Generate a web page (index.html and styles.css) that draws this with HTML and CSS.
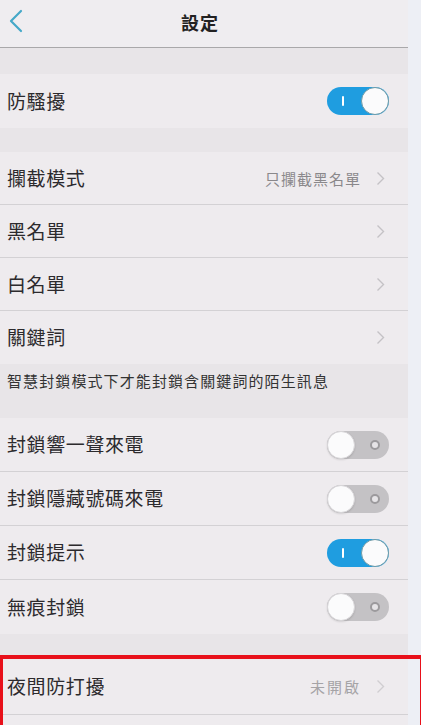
FILE: index.html
```html
<!DOCTYPE html>
<html lang="zh-Hant">
<head>
<meta charset="utf-8">
<title>設定</title>
<link rel="stylesheet" href="styles.css">
</head>
<body>
<div class="page">
  <main class="screen">
    <header class="topbar">
      <svg class="back" width="16" height="24" viewBox="0 0 16 24"><path d="M13 2 L3 12 L13 22" fill="none" stroke="#45a8c8" stroke-width="2.2" stroke-linecap="round" stroke-linejoin="round"/></svg>
      <h1 class="title">設定</h1>
    </header>

    <div class="gap g1"></div>
    <section class="group">
      <div class="row tall"><span class="label">防騷擾</span><span class="switch on"><span class="bar"></span><span class="knob"></span></span></div>
    </section>

    <div class="gap g2"></div>
    <section class="group">
      <div class="row sep"><span class="label">攔截模式</span><span class="trail"><span class="value">只攔截黑名單</span><svg class="chev" width="9" height="15" viewBox="0 0 9 15"><path d="M1.5 1.5 L7.5 7.5 L1.5 13.5" fill="none" stroke="#c4c2c5" stroke-width="1.4"/></svg></span></div>
      <div class="row sep"><span class="label">黑名單</span><span class="trail"><svg class="chev" width="9" height="15" viewBox="0 0 9 15"><path d="M1.5 1.5 L7.5 7.5 L1.5 13.5" fill="none" stroke="#c4c2c5" stroke-width="1.4"/></svg></span></div>
      <div class="row sep"><span class="label">白名單</span><span class="trail"><svg class="chev" width="9" height="15" viewBox="0 0 9 15"><path d="M1.5 1.5 L7.5 7.5 L1.5 13.5" fill="none" stroke="#c4c2c5" stroke-width="1.4"/></svg></span></div>
      <div class="row"><span class="label">關鍵詞</span><span class="trail"><svg class="chev" width="9" height="15" viewBox="0 0 9 15"><path d="M1.5 1.5 L7.5 7.5 L1.5 13.5" fill="none" stroke="#c4c2c5" stroke-width="1.4"/></svg></span></div>
    </section>

    <p class="note">智慧封鎖模式下才能封鎖含關鍵詞的陌生訊息</p>

    <section class="group">
      <div class="row r54 sep"><span class="label">封鎖響一聲來電</span><span class="switch off"><span class="knob"></span><span class="ring"></span></span></div>
      <div class="row r54 sep"><span class="label">封鎖隱藏號碼來電</span><span class="switch off"><span class="knob"></span><span class="ring"></span></span></div>
      <div class="row r54 sep"><span class="label">封鎖提示</span><span class="switch on"><span class="bar"></span><span class="knob"></span></span></div>
      <div class="row r54"><span class="label">無痕封鎖</span><span class="switch off"><span class="knob"></span><span class="ring"></span></span></div>
    </section>

    <div class="gap g3"></div>
    <section class="group highlight">
      <div class="row night sep"><span class="label">夜間防打擾</span><span class="trail"><span class="value faded">未開啟</span><svg class="chev" width="9" height="15" viewBox="0 0 9 15"><path d="M1.5 1.5 L7.5 7.5 L1.5 13.5" fill="none" stroke="#d0ced1" stroke-width="1.4"/></svg></span></div>
    </section>
  </main>
  <aside class="strip"></aside>
</div>
</body>
</html>
```
FILE: styles.css
```css
* { box-sizing: border-box; }
html, body { margin: 0; padding: 0; }
body {
  background: #edeff5;
  font-family: "Noto Sans CJK TC", "Noto Sans", sans-serif;
  color: #2e2c2f;
  overflow: hidden;
}
.page {
  display: flex;
  width: 421px;
  height: 725px;
}
.screen {
  width: 408px;
  flex: none;
  background: #eeebee;
}
.strip {
  flex: 1;
  background: #edeff5;
}
.topbar {
  height: 48px;
  display: flex;
  align-items: center;
  justify-content: center;
  position: relative;
  background: #efedf0;
  border-bottom: 1px solid #a9a8aa;
}
.back {
  position: absolute;
  left: 8px;
  top: 9px;
}
.title {
  margin: 0 8px 4px 0;
  font-size: 18px;
  font-weight: 700;
  color: #222;
  letter-spacing: 1px;
}
.gap { background: #e8e5e8; }
.g1 { height: 26px; }
.g2 { height: 24px; }
.g3 { height: 21px; }
.group { background: #eeebee; }
.row {
  height: 53px;
  display: flex;
  align-items: center;
  justify-content: space-between;
  padding: 0 19px 0 7px;
}
.row.tall { height: 54px; }
.row.r54 { height: 54px; }
.row.sep { border-bottom: 1px solid #d3d1d4; }
.label {
  font-size: 19px;
  letter-spacing: 0.6px;
  color: #2c2a2d;
  padding-bottom: 2px;
}
.trail {
  display: flex;
  align-items: center;
  gap: 15px;
  padding-right: 4px;
}
.value {
  font-size: 15px;
  letter-spacing: 1px;
  color: #8a888b;
}
.value.faded { color: #a5a3a6; letter-spacing: 2px; }
.chev { display: block; }
.note {
  margin: 0;
  height: 54px;
  padding: 6px 0 0 7px;
  font-size: 15px;
  letter-spacing: 1.1px;
  color: #333;
  background: #e8e5e8;
}
.switch {
  position: relative;
  width: 62px;
  height: 28px;
  border-radius: 14px;
  flex: none;
  margin-right: 0;
}
.switch.on { background: #1f9de0; }
.switch.off { background: #c4c2c5; }
.switch .knob {
  position: absolute;
  top: 0;
  width: 28px;
  height: 28px;
  border-radius: 50%;
  background: #fbfbfc;
}
.switch.on .knob {
  right: 0;
  border: 1.5px solid #6f9aa6;
}
.switch.off .knob {
  left: 0;
  border: 1px solid #d8d6d9;
  box-shadow: 0 1px 2px rgba(0,0,0,0.12);
}
.switch .bar {
  position: absolute;
  left: 15px;
  top: 9px;
  width: 2px;
  height: 10px;
  background: #fff;
  border-radius: 1px;
}
.switch .ring {
  position: absolute;
  right: 9px;
  top: 9px;
  width: 10px;
  height: 10px;
  border-radius: 50%;
  border: 2px solid #9c9a9d;
  background: #e6e4e7;
}
.highlight {
  position: relative;
  background: #eeebee;
}
.highlight::after {
  content: "";
  position: absolute;
  left: 0;
  top: 0;
  width: 417px;
  height: 70px;
  border: 4px solid #e8101a;
  border-left-width: 3px;
  pointer-events: none;
}
.row.night {
  height: 60px;
  padding-top: 4px;
}
```
